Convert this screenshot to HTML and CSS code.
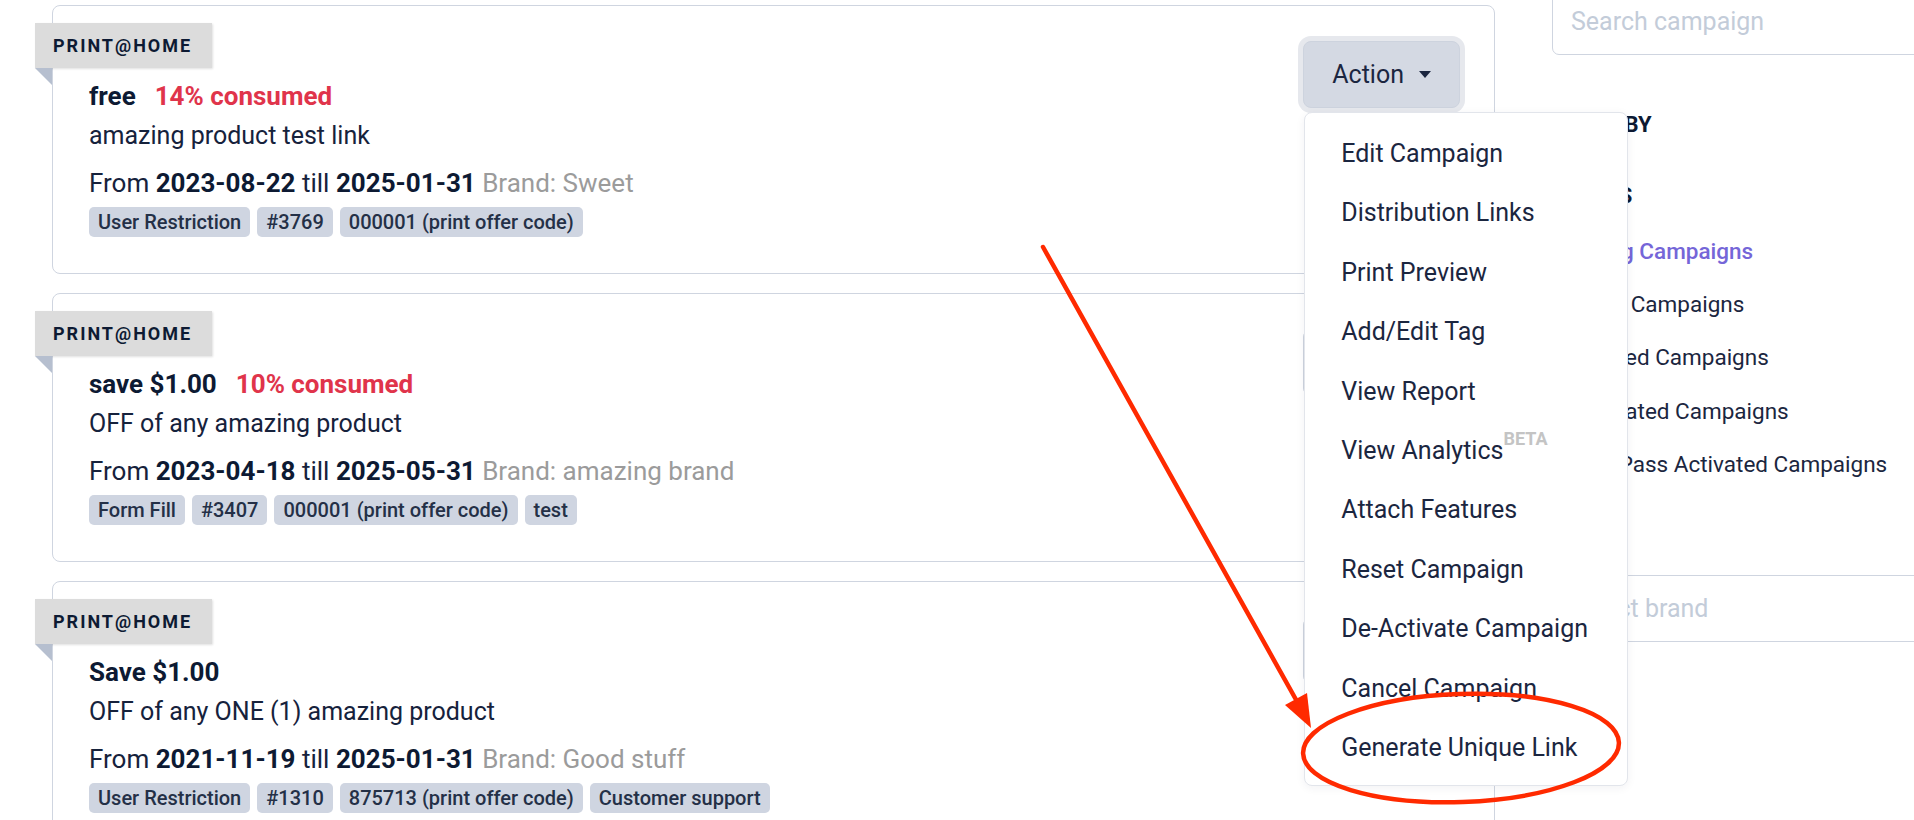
FILE: index.html
```html
<!DOCTYPE html>
<html lang="en">
<head>
<meta charset="utf-8">
<title>Campaigns</title>
<link rel="stylesheet" href="styles.css">
</head>
<body>
<div class="page">
  <div class="campaigns">
    <div class="card">
      <div class="card-main">
        <div class="ribbon">PRINT@HOME</div>
        <div class="card-content">
          <div class="title"><span class="name">free</span><span class="consumed">14% consumed</span></div>
          <div class="desc">amazing product test link</div>
          <div class="dates">From <b>2023-08-22</b> till <b>2025-01-31</b> <span class="brand">Brand: Sweet</span></div>
          <div class="tags"><span class="tag">User Restriction</span><span class="tag">#3769</span><span class="tag">000001 (print offer code)</span></div>
        </div>
      </div>
      <div class="card-side">
        <div class="dropdown">
          <button class="action focused">Action<span class="caret"></span></button>
          <ul class="menu">
            <li>Edit Campaign</li>
            <li>Distribution Links</li>
            <li>Print Preview</li>
            <li>Add/Edit Tag</li>
            <li>View Report</li>
            <li>View Analytics<sup class="beta">BETA</sup></li>
            <li>Attach Features</li>
            <li>Reset Campaign</li>
            <li>De-Activate Campaign</li>
            <li>Cancel Campaign</li>
            <li>Generate Unique Link</li>
          </ul>
        </div>
      </div>
    </div>

    <div class="card">
      <div class="card-main">
        <div class="ribbon">PRINT@HOME</div>
        <div class="card-content">
          <div class="title"><span class="name">save $1.00</span><span class="consumed">10% consumed</span></div>
          <div class="desc">OFF of any amazing product</div>
          <div class="dates">From <b>2023-04-18</b> till <b>2025-05-31</b> <span class="brand">Brand: amazing brand</span></div>
          <div class="tags"><span class="tag">Form Fill</span><span class="tag">#3407</span><span class="tag">000001 (print offer code)</span><span class="tag">test</span></div>
        </div>
      </div>
      <div class="card-side">
        <div class="dropdown">
          <button class="action">Action<span class="caret"></span></button>
        </div>
      </div>
    </div>

    <div class="card">
      <div class="card-main">
        <div class="ribbon">PRINT@HOME</div>
        <div class="card-content">
          <div class="title"><span class="name">Save $1.00</span></div>
          <div class="desc">OFF of any ONE (1) amazing product</div>
          <div class="dates">From <b>2021-11-19</b> till <b>2025-01-31</b> <span class="brand">Brand: Good stuff</span></div>
          <div class="tags"><span class="tag">User Restriction</span><span class="tag">#1310</span><span class="tag">875713 (print offer code)</span><span class="tag">Customer support</span></div>
        </div>
      </div>
      <div class="card-side">
        <div class="dropdown">
          <button class="action">Action<span class="caret"></span></button>
        </div>
      </div>
    </div>
  </div>

  <aside class="sidebar">
    <div class="input">Search campaign</div>
    <h3 class="side-heading first">FILTER BY</h3>
    <h3 class="side-heading">STATUS</h3>
    <ul class="status-list">
      <li class="active">Running Campaigns</li>
      <li>Expired Campaigns</li>
      <li>Cancelled Campaigns</li>
      <li>Deactivated Campaigns</li>
      <li>Wallet Pass Activated Campaigns</li>
    </ul>
    <div class="input brand-input">Select brand</div>
  </aside>
</div>

<svg class="annotation" width="1914" height="820" viewBox="0 0 1914 820" xmlns="http://www.w3.org/2000/svg">
  <line x1="1043" y1="247" x2="1299" y2="705" stroke="#ff2a00" stroke-width="4.5" stroke-linecap="round"/>
  <polygon points="1311,728 1285,705 1307,693" fill="#ff2a00"/>
  <ellipse cx="1461" cy="748" rx="158" ry="54" fill="none" stroke="#ff2a00" stroke-width="4.5" transform="rotate(-2 1461 748)"/>
</svg>
</body>
</html>
```

FILE: styles.css
```css
* { box-sizing: border-box; }

html, body {
  margin: 0;
  padding: 0;
  width: 1914px;
  height: 820px;
  overflow: hidden;
  background: #ffffff;
  font-family: Roboto, "Liberation Sans", Arial, sans-serif;
  color: #16223c;
}

body { position: relative; }

.page {
  display: flex;
  align-items: flex-start;
  gap: 57px;
  padding: 5px 0 0 52px;
}

.campaigns {
  flex: 0 0 1443px;
  display: flex;
  flex-direction: column;
  gap: 19px;
}

.card {
  display: flex;
  border: 1px solid #cfd5e0;
  border-radius: 8px;
  background: #fff;
}

.card-main {
  flex: 1;
  padding-top: 17px;
}

.ribbon {
  position: relative;
  width: 177px;
  height: 45px;
  margin-left: -18px;
  padding-left: 18px;
  background: #dcdcdc;
  box-shadow: 1px 1px 2px rgba(0, 0, 0, 0.12);
  font-size: 18px;
  font-weight: 700;
  letter-spacing: 2px;
  line-height: 45px;
  color: #0d1a33;
}

.ribbon::after {
  content: "";
  position: absolute;
  left: 0;
  top: 100%;
  width: 17px;
  height: 17px;
  background: #b6bfcf;
  clip-path: polygon(0 0, 100% 0, 100% 100%);
}

.card-content {
  margin-left: 36px;
  padding-bottom: 36px;
}

.title {
  margin-top: 8px;
  font-size: 26px;
  line-height: 40px;
  font-weight: 700;
  color: #0d1a33;
}

.consumed {
  margin-left: 19px;
  color: #e0344b;
}

.desc {
  font-size: 25px;
  line-height: 40px;
}

.dates {
  margin-top: 7px;
  font-size: 26px;
  line-height: 40px;
}

.dates b {
  font-weight: 700;
  color: #0d1a33;
}

.brand {
  color: #9b9b9b;
}

.tags {
  display: flex;
  gap: 7px;
  margin-top: 4px;
}

.tag {
  height: 30px;
  padding: 0 9px;
  border-radius: 5px;
  background: #cfd5e1;
  font-size: 20px;
  font-weight: 500;
  line-height: 30px;
  color: #243047;
}

.card-side {
  padding: 35px 34px 0 0;
}

.dropdown {
  position: relative;
}

.action {
  display: flex;
  align-items: center;
  height: 67px;
  padding: 0 28px;
  border: 1px solid #cdd3de;
  border-radius: 8px;
  background: #d4d9e3;
  font-family: inherit;
  font-size: 25px;
  color: #1b2640;
}

.action.focused {
  box-shadow: 0 0 0 5px #e6e8ed;
}

.caret {
  width: 0;
  height: 0;
  margin-left: 15px;
  border-left: 6.5px solid transparent;
  border-right: 6.5px solid transparent;
  border-top: 7px solid #1b2640;
}

.menu {
  position: absolute;
  z-index: 10;
  top: calc(100% + 4px);
  left: 1px;
  width: 324px;
  margin: 0;
  padding: 11px 0 8px;
  list-style: none;
  background: #fff;
  border: 1px solid #e2e5eb;
  border-radius: 8px;
  box-shadow: 0 2px 10px rgba(30, 40, 60, 0.06);
}

.menu li {
  padding: 12px 36px;
  font-size: 25px;
  line-height: 35.4px;
  white-space: nowrap;
  color: #1b2640;
}

.beta {
  font-size: 18px;
  font-weight: 700;
  color: #c4c4c4;
  vertical-align: 14px;
  line-height: 0;
}

.sidebar {
  flex: 0 0 420px;
  margin-top: -16px;
}

.input {
  height: 66px;
  padding-left: 18px;
  border: 1px solid #cfd5e0;
  border-radius: 7px;
  font-size: 25px;
  line-height: 64px;
  color: #c3ccd9;
}

.side-heading {
  margin: 53px 0 0 -1px;
  font-size: 22px;
  line-height: 34px;
  font-weight: 700;
  color: #0d1a33;
}

.side-heading + .side-heading {
  margin-top: 37px;
}

.status-list {
  list-style: none;
  margin: 12px 0 0 -1px;
  padding: 0;
}

.status-list li {
  font-size: 22.5px;
  line-height: 53.2px;
  color: #1b2640;
}

.status-list li.active {
  color: #7566d8;
  font-weight: 500;
}

.brand-input {
  margin-top: 84px;
  height: 67px;
  border-radius: 0;
  border-left: 0;
  border-right: 0;
  padding-left: 18px;
  line-height: 65px;
}

.annotation {
  position: absolute;
  z-index: 20;
  top: 0;
  left: 0;
  pointer-events: none;
}
```
